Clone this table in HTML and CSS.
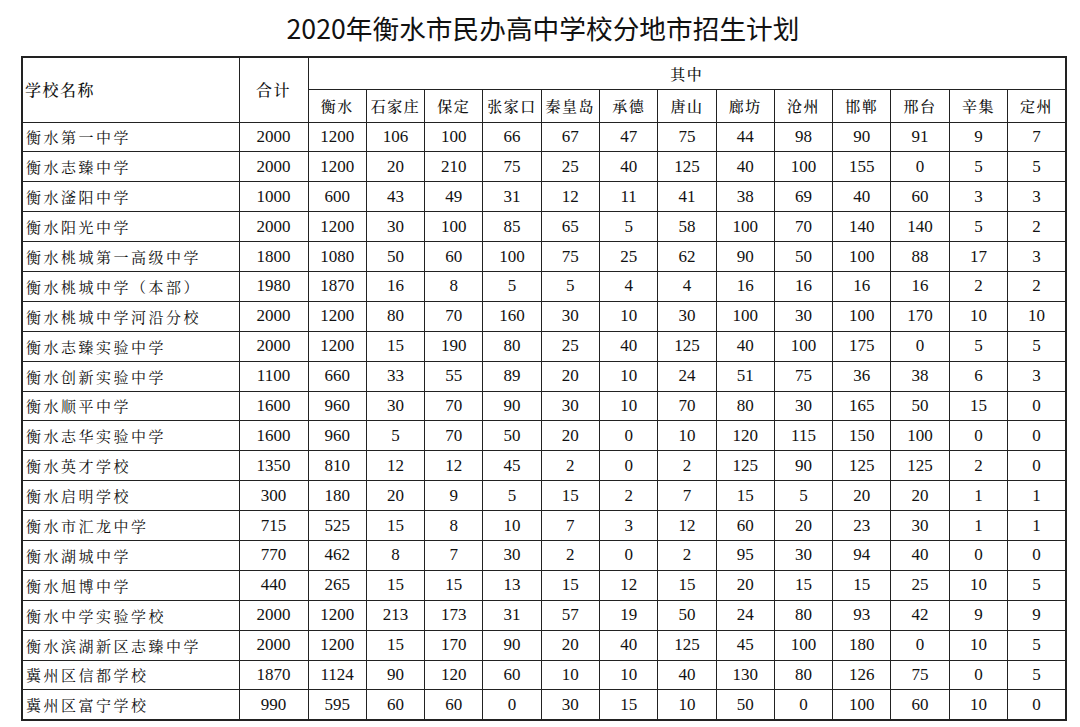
FILE: index.html
```html
<!DOCTYPE html>
<html lang="zh-CN">
<head>
<meta charset="utf-8">
<title>2020年衡水市民办高中学校分地市招生计划</title>
<link rel="stylesheet" href="styles.css">
</head>
<body>
<div class="page">
  <h1 class="title">2020年衡水市民办高中学校分地市招生计划</h1>
  <table class="plan">
    <colgroup>
      <col class="c-name"><col class="c-total">
      <col class="c-city"><col class="c-city"><col class="c-city"><col class="c-city"><col class="c-city"><col class="c-city"><col class="c-city"><col class="c-city"><col class="c-city"><col class="c-city"><col class="c-city"><col class="c-city"><col class="c-city">
    </colgroup>
    <thead>
      <tr class="h1">
        <th rowspan="2" class="name-h">学校名称</th>
        <th rowspan="2" class="total-h">合计</th>
        <th colspan="13">其中</th>
      </tr>
      <tr class="h2">
        <th>衡水</th><th>石家庄</th><th>保定</th><th>张家口</th><th>秦皇岛</th><th>承德</th><th>唐山</th><th>廊坊</th><th>沧州</th><th>邯郸</th><th>邢台</th><th>辛集</th><th>定州</th>
      </tr>
    </thead>
    <tbody>
      <tr><td class="name">衡水第一中学</td><td>2000</td><td>1200</td><td>106</td><td>100</td><td>66</td><td>67</td><td>47</td><td>75</td><td>44</td><td>98</td><td>90</td><td>91</td><td>9</td><td>7</td></tr>
      <tr><td class="name">衡水志臻中学</td><td>2000</td><td>1200</td><td>20</td><td>210</td><td>75</td><td>25</td><td>40</td><td>125</td><td>40</td><td>100</td><td>155</td><td>0</td><td>5</td><td>5</td></tr>
      <tr><td class="name">衡水滏阳中学</td><td>1000</td><td>600</td><td>43</td><td>49</td><td>31</td><td>12</td><td>11</td><td>41</td><td>38</td><td>69</td><td>40</td><td>60</td><td>3</td><td>3</td></tr>
      <tr><td class="name">衡水阳光中学</td><td>2000</td><td>1200</td><td>30</td><td>100</td><td>85</td><td>65</td><td>5</td><td>58</td><td>100</td><td>70</td><td>140</td><td>140</td><td>5</td><td>2</td></tr>
      <tr><td class="name">衡水桃城第一高级中学</td><td>1800</td><td>1080</td><td>50</td><td>60</td><td>100</td><td>75</td><td>25</td><td>62</td><td>90</td><td>50</td><td>100</td><td>88</td><td>17</td><td>3</td></tr>
      <tr><td class="name">衡水桃城中学（本部）</td><td>1980</td><td>1870</td><td>16</td><td>8</td><td>5</td><td>5</td><td>4</td><td>4</td><td>16</td><td>16</td><td>16</td><td>16</td><td>2</td><td>2</td></tr>
      <tr><td class="name">衡水桃城中学河沿分校</td><td>2000</td><td>1200</td><td>80</td><td>70</td><td>160</td><td>30</td><td>10</td><td>30</td><td>100</td><td>30</td><td>100</td><td>170</td><td>10</td><td>10</td></tr>
      <tr><td class="name">衡水志臻实验中学</td><td>2000</td><td>1200</td><td>15</td><td>190</td><td>80</td><td>25</td><td>40</td><td>125</td><td>40</td><td>100</td><td>175</td><td>0</td><td>5</td><td>5</td></tr>
      <tr><td class="name">衡水创新实验中学</td><td>1100</td><td>660</td><td>33</td><td>55</td><td>89</td><td>20</td><td>10</td><td>24</td><td>51</td><td>75</td><td>36</td><td>38</td><td>6</td><td>3</td></tr>
      <tr><td class="name">衡水顺平中学</td><td>1600</td><td>960</td><td>30</td><td>70</td><td>90</td><td>30</td><td>10</td><td>70</td><td>80</td><td>30</td><td>165</td><td>50</td><td>15</td><td>0</td></tr>
      <tr><td class="name">衡水志华实验中学</td><td>1600</td><td>960</td><td>5</td><td>70</td><td>50</td><td>20</td><td>0</td><td>10</td><td>120</td><td>115</td><td>150</td><td>100</td><td>0</td><td>0</td></tr>
      <tr><td class="name">衡水英才学校</td><td>1350</td><td>810</td><td>12</td><td>12</td><td>45</td><td>2</td><td>0</td><td>2</td><td>125</td><td>90</td><td>125</td><td>125</td><td>2</td><td>0</td></tr>
      <tr><td class="name">衡水启明学校</td><td>300</td><td>180</td><td>20</td><td>9</td><td>5</td><td>15</td><td>2</td><td>7</td><td>15</td><td>5</td><td>20</td><td>20</td><td>1</td><td>1</td></tr>
      <tr><td class="name">衡水市汇龙中学</td><td>715</td><td>525</td><td>15</td><td>8</td><td>10</td><td>7</td><td>3</td><td>12</td><td>60</td><td>20</td><td>23</td><td>30</td><td>1</td><td>1</td></tr>
      <tr><td class="name">衡水湖城中学</td><td>770</td><td>462</td><td>8</td><td>7</td><td>30</td><td>2</td><td>0</td><td>2</td><td>95</td><td>30</td><td>94</td><td>40</td><td>0</td><td>0</td></tr>
      <tr><td class="name">衡水旭博中学</td><td>440</td><td>265</td><td>15</td><td>15</td><td>13</td><td>15</td><td>12</td><td>15</td><td>20</td><td>15</td><td>15</td><td>25</td><td>10</td><td>5</td></tr>
      <tr><td class="name">衡水中学实验学校</td><td>2000</td><td>1200</td><td>213</td><td>173</td><td>31</td><td>57</td><td>19</td><td>50</td><td>24</td><td>80</td><td>93</td><td>42</td><td>9</td><td>9</td></tr>
      <tr><td class="name">衡水滨湖新区志臻中学</td><td>2000</td><td>1200</td><td>15</td><td>170</td><td>90</td><td>20</td><td>40</td><td>125</td><td>45</td><td>100</td><td>180</td><td>0</td><td>10</td><td>5</td></tr>
      <tr><td class="name">冀州区信都学校</td><td>1870</td><td>1124</td><td>90</td><td>120</td><td>60</td><td>10</td><td>10</td><td>40</td><td>130</td><td>80</td><td>126</td><td>75</td><td>0</td><td>5</td></tr>
      <tr><td class="name">冀州区富宁学校</td><td>990</td><td>595</td><td>60</td><td>60</td><td>0</td><td>30</td><td>15</td><td>10</td><td>50</td><td>0</td><td>100</td><td>60</td><td>10</td><td>0</td></tr>
    </tbody>
  </table>
</div>
</body>
</html>
```

FILE: styles.css
```css
html, body {
  margin: 0;
  padding: 0;
  background: #ffffff;
}

.page {
  width: 1080px;
  padding: 0 0 0 21px;
  box-sizing: border-box;
}

.title {
  margin: 0;
  width: 1044px;
  height: 56px;
  line-height: 56px;
  text-align: center;
  font-family: "Noto Sans CJK SC", "Noto Sans", sans-serif;
  font-weight: 400;
  font-size: 26.7px;
  color: #111;
}

.plan {
  border-collapse: collapse;
  table-layout: fixed;
  width: 1044px;
  border: 2px solid #222;
  font-family: "Liberation Serif", "Noto Serif CJK SC", "Noto Sans CJK SC", serif;
  color: #111;
}

.c-name { width: 217px; }
.c-total { width: 69px; }
.c-city { width: 58.3px; }

.plan th,
.plan td {
  border: 1px solid #222;
  padding: 0;
  text-align: center;
  vertical-align: middle;
  overflow: hidden;
  white-space: nowrap;
}

.plan th {
  font-family: "Noto Serif CJK SC", "Noto Sans CJK SC", serif;
  font-weight: 500;
  font-size: 15px;
  letter-spacing: 1.5px;
}

.h1 { height: 32px; }
.h2 { height: 33px; }

.plan th.name-h {
  text-align: left;
  padding-left: 2px;
  font-size: 16px;
  letter-spacing: 1.5px;
}

.plan th.total-h {
  font-size: 16px;
}

.plan tbody tr {
  height: 29.9px;
}

.plan td {
  font-size: 17px;
}

.plan td.name {
  text-align: left;
  padding-left: 3px;
  font-family: "Noto Serif CJK SC", "Noto Sans CJK SC", serif;
  font-size: 15px;
  letter-spacing: 2.5px;
  font-weight: 400;
}
```
